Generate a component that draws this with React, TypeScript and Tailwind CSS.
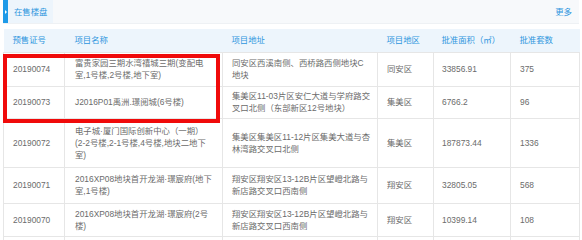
import React from "react";

type Row = {
  no: string;
  name: string[];
  addr: string[];
  area: string;
  size: string;
  units: string;
  h: string;
};

const rows: Row[] = [
  {
    no: "20190074",
    name: ["富贵家园三期水湾禧城三期(变配电", "室,1号楼,2号楼,地下室)"],
    addr: ["同安区西溪南侧、西桥路西侧地块C", "地块"],
    area: "同安区",
    size: "33856.91",
    units: "375",
    h: "h-[34px]",
  },
  {
    no: "20190073",
    name: ["J2016P01禹洲.璟阅城(6号楼)"],
    addr: ["集美区11-03片区安仁大道与学府路交", "叉口北侧（东部新区12号地块）"],
    area: "集美区",
    size: "6766.2",
    units: "96",
    h: "h-[32px]",
  },
  {
    no: "20190072",
    name: ["电子城·厦门国际创新中心（一期）", "(2-2号楼,2-1号楼,4号楼,地块二地下", "室)"],
    addr: ["集美区集美区11-12片区集美大道与杏", "林湾路交叉口北侧"],
    area: "集美区",
    size: "187873.44",
    units: "1336",
    h: "h-[49px]",
  },
  {
    no: "20190071",
    name: ["2016XP08地块首开龙湖·璟宸府(地下", "室,1号楼)"],
    addr: ["翔安区翔安区13-12B片区望嶝北路与", "新店路交叉口西南侧"],
    area: "翔安区",
    size: "32805.05",
    units: "568",
    h: "h-[36px]",
  },
  {
    no: "20190070",
    name: ["2016XP08地块首开龙湖·璟宸府(2号", "楼)"],
    addr: ["翔安区翔安区13-12B片区望嶝北路与", "新店路交叉口西南侧"],
    area: "翔安区",
    size: "10399.14",
    units: "108",
    h: "h-[33px]",
  },
];

const cell = "border border-[#e6e6e6] pl-[9px] align-middle";

function Lines({ lines }: { lines: string[] }) {
  return (
    <>
      {lines.map((l, i) => (
        <div key={i} className="whitespace-nowrap">
          {l}
        </div>
      ))}
    </>
  );
}

export default function App() {
  return (
    <div
      className="w-[582px] h-[240px] overflow-hidden bg-white px-[3px] text-[8.4px] leading-[12px] text-[#6b6b6b]"
      style={{ fontFamily: '"Liberation Sans", "Noto Sans CJK SC", sans-serif' }}
    >
      <div className="w-[576px] h-[24px] flex items-stretch bg-[#f7f9fb] border-b border-[#eef1f4]">
        <div className="w-[5px] bg-[#1e9ae8] flex items-center justify-center">
          <div className="w-0 h-0 border-y-[2px] border-y-transparent border-l-[2px] border-l-white" />
        </div>
        <div className="w-[45px] bg-[#edf5fc] flex items-center pl-[6px] text-[#2d95de]">在售楼盘</div>
        <div className="flex-1" />
        <div className="flex items-center pr-[7px] text-[#2d95de]">更多</div>
      </div>

      <div className="relative mt-[5px] w-[576px]">
        <table className="w-[576px] table-fixed border-collapse">
          <colgroup>
            <col className="w-[61px]" />
            <col className="w-[158px]" />
            <col className="w-[155px]" />
            <col className="w-[56px]" />
            <col className="w-[77px]" />
            <col className="w-[69px]" />
          </colgroup>
          <thead>
            <tr className="h-[23px] bg-[#edf5fc] text-[#2d95de] text-left">
              <th className="pl-[9px] font-normal">预售证号</th>
              <th className="pl-[10px] font-normal">项目名称</th>
              <th className="pl-[9px] font-normal">项目地址</th>
              <th className="pl-[9px] font-normal">项目地区</th>
              <th className="pl-[8px] font-normal whitespace-nowrap">批准面积（㎡）</th>
              <th className="pl-[9px] font-normal">批准套数</th>
            </tr>
          </thead>
          <tbody>
            {rows.map((r) => (
              <tr key={r.no} className={r.h}>
                <td className={cell}>{r.no}</td>
                <td className="border border-[#e6e6e6] pl-[10px] align-middle">
                  <Lines lines={r.name} />
                </td>
                <td className={cell}>
                  <Lines lines={r.addr} />
                </td>
                <td className={cell}>{r.area}</td>
                <td className="border border-[#e6e6e6] pl-[8px] align-middle">{r.size}</td>
                <td className={cell}>{r.units}</td>
              </tr>
            ))}
            <tr className="h-[30px]">
              <td className={cell} />
              <td className={cell} />
              <td className={cell} />
              <td className={cell} />
              <td className={cell} />
              <td className={cell} />
            </tr>
          </tbody>
        </table>
        <div className="absolute left-0 top-[25px] w-[217px] h-[69px] border-[4px] border-[#f00a0a]" />
      </div>
    </div>
  );
}
